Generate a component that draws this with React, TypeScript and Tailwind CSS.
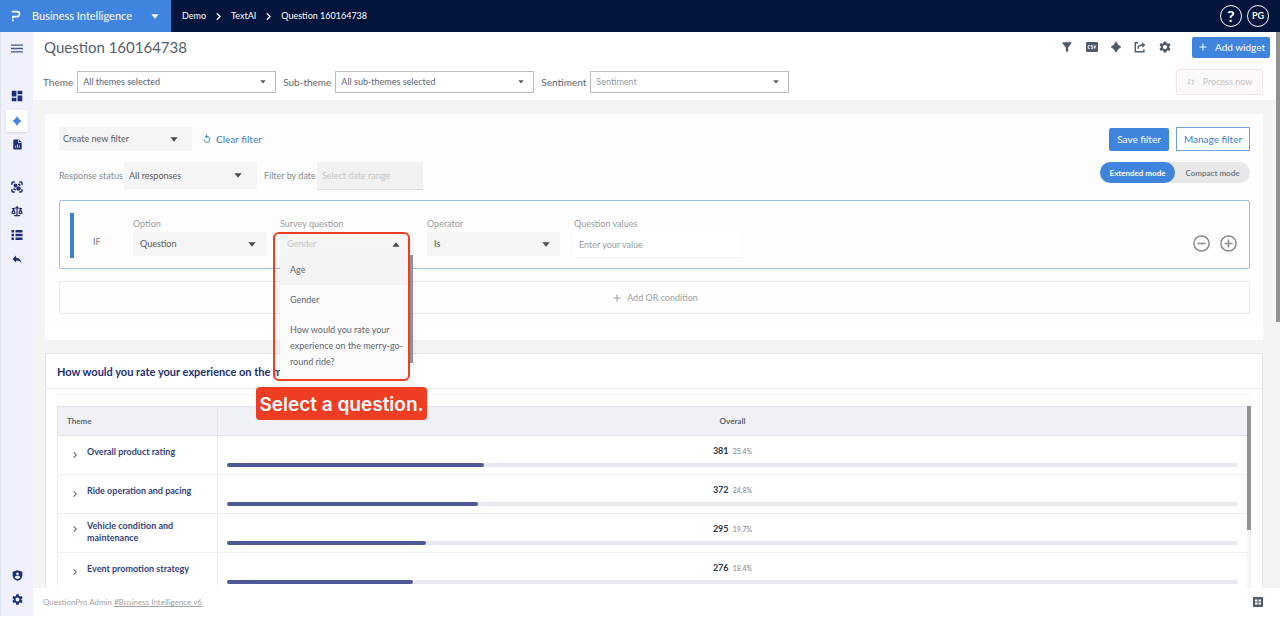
import React from "react";
import {
  MdAdd,
  MdChevronRight,
  MdDashboard,
  MdFilterAlt,
  MdReplay,
  MdReply,
  MdSettings,
} from "react-icons/md";
import { Scale } from "lucide-react";

interface IconProps {
  className?: string;
}

const Caret: React.FC<IconProps> = ({ className = "" }) => (
  <svg viewBox="0 0 8 5" className={className} fill="currentColor" aria-hidden="true">
    <path d="M0.4 0.3h7.2L4 4.8z" />
  </svg>
);

const Logo: React.FC<IconProps> = ({ className = "" }) => (
  <svg viewBox="0 0 10 12" className={className} fill="none" stroke="currentColor" strokeWidth="1.7" aria-hidden="true">
    <path d="M.8 1.6h5.200a2.500 2.500 0 0 1 0 5H1.900V8.400" />
    <path d="M1.900 9.600v1.700" />
  </svg>
);

const MenuIcon: React.FC<IconProps> = ({ className = "" }) => (
  <svg viewBox="0 0 12 9" className={className} fill="none" stroke="currentColor" strokeWidth="1.300" aria-hidden="true">
    <path d="M0 1.200h12M0 4.500h12M0 7.800h12" />
  </svg>
);

const Spark: React.FC<IconProps> = ({ className = "" }) => (
  <svg viewBox="0 0 12 12" className={className} fill="currentColor" aria-hidden="true">
    <path d="M6 0.600 8.100 3.900 11 6 8.100 8.100 6 11.400 3.900 8.100 1 6 3.900 3.900z" stroke="currentColor" strokeWidth=".6" strokeLinejoin="round" />
  </svg>
);

const ReportIcon: React.FC<IconProps> = ({ className = "" }) => (
  <svg viewBox="0 0 12 12" className={className} aria-hidden="true">
    <path fill="currentColor" d="M2.600.5h5l3 3v7a1 1 0 0 1-1 1H2.400a1 1 0 0 1-1-1v-9a1 1 0 0 1 1.200-1z" />
    <path stroke="#eff2fc" strokeWidth=".9" fill="none" d="M4 9.500V7.400M6 9.500V5.800M8 9.500V7M7.100.8v3.200h3.200" />
  </svg>
);

const ScanIcon: React.FC<IconProps> = ({ className = "" }) => (
  <svg viewBox="0 0 12 12" className={className} fill="none" stroke="currentColor" strokeWidth="1.500" aria-hidden="true">
    <path d="M.9 3.800V2.400A1.500 1.500 0 0 1 2.400.9h1.400M8.200.9h1.400a1.500 1.500 0 0 1 1.500 1.500v1.400M11.100 8.200v1.400a1.500 1.500 0 0 1-1.500 1.500H8.200M3.800 11.100H2.400A1.500 1.500 0 0 1 .9 9.600V8.200" />
    <circle cx="4.500" cy="4.500" r="1.900" fill="currentColor" stroke="none" />
    <circle cx="7.500" cy="7.500" r="2.200" fill="currentColor" stroke="none" />
    <path d="M7 3.300h1.800v1.800M3.200 6.800v1.900h1.900" strokeWidth="1.300" />
  </svg>
);

const ListIcon: React.FC<IconProps> = ({ className = "" }) => (
  <svg viewBox="0 0 12 12" className={className} fill="currentColor" aria-hidden="true">
    <path d="M.5 1H3v2.400H.5zM4.500 1h7v2.400h-7zM.5 4.800H3v2.400H.5zM4.500 4.800h7v2.400h-7zM.5 8.600H3V11H.5zM4.500 8.600h7V11h-7z" />
  </svg>
);

const ShieldIcon: React.FC<IconProps> = ({ className = "" }) => (
  <svg viewBox="0 0 12 12" className={className} aria-hidden="true">
    <path fill="currentColor" d="M6 .3 11.300 2V6c0 2.900-2.300 5-5.300 5.800C3 11 .7 8.900.7 6V2z" />
    <circle cx="6" cy="4.200" r="1.500" fill="#eff2fc" />
    <path fill="#eff2fc" d="M3 7.800C3.600 6.600 4.700 6.300 6 6.300s2.400.3 3 1.500C8.400 8.900 7.400 9.700 6 9.700S3.600 8.900 3 7.800z" />
  </svg>
);

const CsvIcon: React.FC<IconProps> = ({ className = "" }) => (
  <svg viewBox="0 0 12 10" className={className} aria-hidden="true">
    <rect width="12" height="10" rx="1.300" fill="currentColor" />
    <path d="M4.200 3.600H2.200v2.800h2M7 3.600H5.200v1.300h1.700v1.500H5M8 3.400l.9 3 .9-3" fill="none" stroke="#fff" strokeWidth=".8" />
  </svg>
);

const ShareIcon: React.FC<IconProps> = ({ className = "" }) => (
  <svg viewBox="0 0 12 12" className={className} fill="none" stroke="currentColor" strokeWidth="1.400" aria-hidden="true">
    <path d="M4 1.800H1.300v9h8.600V8.200" />
    <path d="M4 7.800C4 5.200 5.600 4 8.600 4" />
    <path d="M8.200 1.200 11.400 4 8.200 6.800z" fill="currentColor" stroke="none" />
  </svg>
);

const SyncIcon: React.FC<IconProps> = ({ className = "" }) => (
  <svg viewBox="0 0 10 10" className={className} fill="none" stroke="currentColor" strokeWidth="1.100" aria-hidden="true">
    <path d="M4.300 2.200H2.400v5.400M5.700 7.800h1.900V2.400" />
    <path d="M1 6.300l1.400 1.500 1.400-1.500M6.200 3.700l1.400-1.500L9 3.700" />
  </svg>
);

const GridIcon: React.FC<IconProps> = ({ className = "" }) => (
  <svg viewBox="0 0 10 10" className={className} aria-hidden="true">
    <rect width="10" height="10" rx="1" fill="currentColor" />
    <path fill="#fff" d="M2 2.500h2.500v2H2zM5.500 2.500H8v2H5.500zM2 5.500h2.500v2H2zM5.500 5.500H8v2H5.500z" />
  </svg>
);

const RoundIcon: React.FC<{ plus?: boolean }> = ({ plus = false }) => (
  <svg viewBox="0 0 17 17" className="size-[17px]" fill="none" stroke="currentColor" strokeWidth="1.500" aria-hidden="true">
    <circle cx="8.500" cy="8.500" r="7.600" />
    <path d="M4.500 8.500h8" strokeWidth="1.600" />
    {plus && <path d="M8.500 4.500v8" strokeWidth="1.600" />}
  </svg>
);

interface SelectBoxProps {
  id: string;
  value: string;
  label?: string;
  className: string;
  selectClass: string;
  caretClass?: string;
}

const SelectBox: React.FC<SelectBoxProps> = ({
  id,
  value,
  label,
  className,
  selectClass,
  caretClass = "right-[14px] w-2 text-[#4a4a4a]",
}) => (
  <div className={`relative flex items-center ${className}`}>
    <select
      id={id}
      aria-label={label}
      className={`size-full appearance-none outline-none ${selectClass}`}
    >
      <option>{value}</option>
    </select>
    <Caret className={`pointer-events-none absolute ${caretClass}`} />
  </div>
);

const topFilters = [
  { id: "theme", label: "Theme", value: "All themes selected", color: "text-[#5b6470]" },
  { id: "subtheme", label: "Sub-theme", value: "All sub-themes selected", color: "text-[#5b6470]" },
  { id: "sentiment", label: "Sentiment", value: "Sentiment", color: "text-[#979ca3]" },
];

const rows = [
  { theme: "Overall product rating", count: 381, percent: 25.4 },
  { theme: "Ride operation and pacing", count: 372, percent: 24.8 },
  { theme: "Vehicle condition and maintenance", count: 295, percent: 19.7 },
  { theme: "Event promotion strategy", count: 276, percent: 18.4 },
];

const questions = [
  "Age",
  "Gender",
  "How would you rate your experience on the merry-go-round ride?",
];

const Header: React.FC = () => (
  <header className="flex h-8 shrink-0 bg-[#03153d] text-white">
    <button className="flex w-[171px] items-center bg-[#3f85e0] pl-[11px] pr-3 text-[11px]">
      <Logo className="mr-[11px] h-3 w-[10px]" />
      Business Intelligence
      <Caret className="ml-auto w-2" />
    </button>
    <nav className="flex items-center gap-[5px] pl-[11px] text-[9px]" aria-label="Breadcrumb">
      <a href="#demo">Demo</a>
      <MdChevronRight className="size-[15px]" />
      <a href="#textai">TextAI</a>
      <MdChevronRight className="size-[15px]" />
      <a href="#question">Question 160164738</a>
    </nav>
    <div className="ml-auto flex items-center gap-[5px] pr-[11px]">
      <button className="flex size-[22px] items-center justify-center rounded-full border border-white text-[16px] font-bold">
        ?
      </button>
      <button className="flex size-[22px] items-center justify-center rounded-full border border-white text-[9px] font-bold">
        PG
      </button>
    </div>
  </header>
);

const Sidebar: React.FC = () => (
  <aside className="mb-[3px] flex w-[33px] shrink-0 flex-col items-center border-l border-[#dfe3ee] bg-[#eff2fc] text-[#1d2f79]">
    <button aria-label="Menu" className="mt-3 text-[#44578f]">
      <MenuIcon className="h-[9px] w-3" />
    </button>
    <button aria-label="Dashboard" className="mt-9 mb-[7px]">
      <MdDashboard className="size-[14px]" />
    </button>
    <button aria-label="TextAI" className="flex size-[22px] items-center justify-center rounded-xs bg-white text-[#3f85e0] shadow-sm">
      <Spark className="size-[10px]" />
    </button>
    <button aria-label="Reports" className="mt-1.5 p-px">
      <ReportIcon className="size-[11px]" />
    </button>
    <button aria-label="Explore" className="mt-[30px]">
      <ScanIcon className="size-3" />
    </button>
    <button aria-label="Compare" className="mt-3">
      <Scale className="size-3" strokeWidth={2.5} />
    </button>
    <button aria-label="List" className="mt-3">
      <ListIcon className="size-3" />
    </button>
    <button aria-label="Back" className="mt-3">
      <MdReply className="size-3" />
    </button>
    <button aria-label="Privacy" className="mt-auto mb-3">
      <ShieldIcon className="size-[11px]" />
    </button>
    <button aria-label="Settings" className="mb-2.5">
      <MdSettings className="size-[13px]" />
    </button>
  </aside>
);

const Toolbar: React.FC = () => (
  <div className="h-[68px] shrink-0 bg-white pl-[10px]">
    <div className="flex h-[30px] items-center pr-1.5 text-[#4f5b69]">
      <h1 className="mr-auto pl-px text-[15px] text-[#545e6b]">Question 160164738</h1>
      <div className="mr-5 flex items-center gap-3">
        <button aria-label="Filter"><MdFilterAlt className="size-[14px]" /></button>
        <button aria-label="Export CSV"><CsvIcon className="h-[10px] w-3" /></button>
        <button aria-label="Insights"><Spark className="size-3" /></button>
        <button aria-label="Share"><ShareIcon className="size-3" /></button>
        <button aria-label="Settings"><MdSettings className="size-[14px]" /></button>
      </div>
      <button className="flex h-[21px] w-[78px] items-center justify-center gap-1.5 rounded-xs bg-[#3f85e0] text-[10px] text-white">
        <MdAdd className="size-3" />
        Add widget
      </button>
    </div>
    <div className="flex items-center pt-[7px] pr-[13px]">
      {topFilters.map((f) => (
        <div key={f.id} className="mr-[7px] flex items-center gap-1">
          <label htmlFor={f.id} className="text-[10px] text-[#5f6872]">
            {f.label}
          </label>
          <SelectBox
            id={f.id}
            value={f.value}
            className="h-[22px] w-[199px]"
            selectClass={`border border-[#b9bcc0] bg-white px-[5px] text-[9px] ${f.color}`}
            caretClass="right-[10px] w-[6px] text-[#4f5b69]"
          />
        </div>
      ))}
      <button
        disabled
        className="ml-auto flex h-[26px] w-[87px] items-center justify-center gap-2 rounded-xs border border-[#f5e3e4] bg-[#fdf8f8] text-[9px] text-[#c3c3c5]"
      >
        <SyncIcon className="size-2" />
        Process now
      </button>
    </div>
  </div>
);

const QuestionPicker: React.FC = () => (
  <div className="relative w-[133px]">
    <button
      id="survey-question"
      aria-haspopup="listbox"
      aria-expanded="true"
      className="flex h-6 w-full items-center justify-between bg-[#f5f5f5] pr-[13px] pl-[7px] text-[9px] text-[#c4c4c4]"
    >
      Gender
      <Caret className="w-2 rotate-180 text-[#4a4a4a]" />
    </button>
    <ul
      role="listbox"
      aria-labelledby="survey-question"
      className="absolute top-[23px] left-0 z-10 h-[145px] w-[133px] bg-[#fafafa] text-[9px] leading-4 text-[#606770] shadow-md"
    >
      {questions.map((q, i) => (
        <li
          key={q}
          role="option"
          aria-selected={i === 0}
          className={`py-[7px] pr-1.5 pl-[10px] ${i === 0 ? "bg-[#f4f4f4]" : ""}`}
        >
          {q}
        </li>
      ))}
    </ul>
    <div className="absolute top-[23px] right-0 z-10 h-[108px] w-[4px] bg-[#929292]" />
    <div className="absolute top-0 -left-[7px] z-20 h-[149px] w-[137px] rounded-md border-2 border-[#ee3d23]" />
    <div className="absolute top-[155px] -left-[24px] z-20 flex h-[33px] w-[171px] items-center justify-center rounded-sm bg-[#ee3d23] pt-[3px] font-['Inter',sans-serif] text-[19px] font-semibold whitespace-nowrap text-white">
      Select a question.
    </div>
  </div>
);

const greySelect = "bg-[#f5f5f5] px-[7px] text-[9px] text-[#555b63]";

const FilterPanel: React.FC = () => (
  <section className="bg-white pb-[14px]">
    <div className="bg-[#fdfdfd] pt-[13px] pr-[13px] pb-3 pl-[14px]">
      <div className="flex h-6 items-center">
        <SelectBox
          id="saved-filter"
          label="Saved filter"
          value="Create new filter"
          className="h-6 w-[133px]"
          selectClass="bg-[#f5f5f5] px-1 text-[9px] text-[#555b63]"
        />
        <button className="ml-2.5 flex items-center gap-1 text-[10px] text-[#3c82cc]">
          <MdReplay className="size-[10px]" />
          Clear filter
        </button>
        <button className="mr-[7px] ml-auto h-[23px] w-[60px] rounded-xs bg-[#3f85e0] text-[10px] text-white">
          Save filter
        </button>
        <button className="h-6 w-[74px] border border-[#6fa4d8] bg-white text-[10px] text-[#3c82cc]">
          Manage filter
        </button>
      </div>
      <div className="mt-[11px] flex items-start text-[9px] text-[#868b91]">
        <div className="flex h-[27px] items-center">
          <label htmlFor="status" className="w-[65px] whitespace-nowrap">Response status</label>
          <SelectBox
            id="status"
            value="All responses"
            className="h-[27px] w-[133px]"
            selectClass="bg-[#f5f5f5] px-[5px] text-[9px] text-[#555b63]"
            caretClass="right-[15px] w-2 text-[#4a4a4a]"
          />
          <label htmlFor="date" className="ml-[7px] w-[53px] whitespace-nowrap">Filter by date</label>
          <input
            id="date"
            placeholder="Select date range"
            className="h-7 w-[106px] border-b border-[#dedede] bg-[#f1f1f1] px-[5px] placeholder:text-[#c6c6c6]"
          />
        </div>
        <div className="ml-auto flex h-[21px] rounded-full bg-[#e8e8e8] text-[8px] font-bold">
          <button className="w-[75px] rounded-full bg-[#3f85e0] text-white">Extended mode</button>
          <button className="w-[75px] text-[#777b80]">Compact mode</button>
        </div>
      </div>
      <div className="mt-[11px] flex h-[69px] rounded-xs border border-[#9dbfe2] pl-2.5 text-[9px] text-[#9a9da1]">
        <div className="mt-3 h-[45px] w-1 bg-[#3f7fd8]" />
        <span className="mt-[34px] w-[59px] pl-[19px] text-[9px] text-[#777b80]">IF</span>
        <div className="flex gap-[14px] pt-[17px]">
          <div className="flex flex-col gap-[2px]">
            <label htmlFor="option" className="leading-3">Option</label>
            <SelectBox id="option" value="Question" className="h-6 w-[133px]" selectClass={greySelect} caretClass="right-[10px] w-2 text-[#4a4a4a]" />
          </div>
          <div className="flex flex-col gap-[2px]">
            <label htmlFor="survey-question" className="leading-3">Survey question</label>
            <QuestionPicker />
          </div>
          <div className="flex flex-col gap-[2px]">
            <label htmlFor="operator" className="leading-3">Operator</label>
            <SelectBox id="operator" value="Is" className="h-6 w-[133px]" selectClass={greySelect} caretClass="right-[10px] w-2 text-[#4a4a4a]" />
          </div>
          <div className="flex flex-col gap-[2px]">
            <label htmlFor="values" className="leading-3">Question values</label>
            <input
              id="values"
              placeholder="Enter your value"
              className="h-[26px] w-[167px] border-b border-[#f3f3f3] bg-white px-[5px] placeholder:text-[#9a9da1]"
            />
          </div>
        </div>
        <div className="ml-auto flex gap-2.5 self-start pt-[34px] pr-3 text-[#8f8f8f]">
          <button aria-label="Remove condition"><RoundIcon /></button>
          <button aria-label="Add condition"><RoundIcon plus /></button>
        </div>
      </div>
      <button className="mt-[12px] flex h-[33px] w-full items-center justify-center gap-1 rounded-xs border border-[#ededed] text-[9px] text-[#a0a0a0]">
        <MdAdd className="size-3" />
        Add OR condition
      </button>
    </div>
  </section>
);

const ThemeWidget: React.FC = () => (
  <section className="mt-[13px] flex min-h-0 flex-1 flex-col overflow-hidden border border-b-0 border-[#e4e4e4] bg-white">
    <h2 className="h-[35px] shrink-0 border-b border-[#ececec] pl-[11px] text-[11px] leading-[35px] font-bold text-[#1d2f6f]">
      How would you rate your experience on the merry-go-round ride?
    </h2>
    <div className="mr-[11px] ml-[10px] mt-[5px] flex min-h-0 flex-1 overflow-hidden border-t border-[#f3f3f3] pt-[11px] pl-px">
      <div className="min-w-0 flex-1">
        <table className="w-full table-fixed border-collapse text-left">
          <thead>
            <tr className="h-[29px] bg-[#f0f1f6] text-[8px] text-[#5b6470]">
              <th className="w-[160px] border border-[#e3e5ea] pl-[9px] font-bold">Theme</th>
              <th className="border border-r-0 border-[#e3e5ea] text-center font-bold">Overall</th>
            </tr>
          </thead>
          <tbody>
            {rows.map((row) => (
              <tr key={row.theme} className="h-[39px]">
                <td className="border border-[#eceef1] pb-[3px] pl-[11px]">
                  <div className="flex items-start gap-1.5 text-[9px] leading-3 font-bold text-[#34437c]">
                    <button aria-label={`Expand ${row.theme}`} className="mt-[3px] text-[#5b6470]">
                      <MdChevronRight className="size-3" />
                    </button>
                    <span className="w-[115px]">{row.theme}</span>
                  </div>
                </td>
                <td className="border border-r-0 border-[#eceef1] px-[9px] pb-px">
                  <div className="text-center leading-3">
                    <span className="text-[9px] font-bold text-[#2b3848]">{row.count}</span>{" "}
                    <span className="text-[7px] text-[#7c8490]">{row.percent}%</span>
                  </div>
                  <div className="mt-[6px] h-1 rounded-full bg-[#e7e8f0]">
                    <div className="h-1 rounded-full bg-[#4d5a95]" style={{ width: `${row.percent}%` }} />
                  </div>
                </td>
              </tr>
            ))}
          </tbody>
        </table>
      </div>
      <div className="w-1 bg-[#f4f4f6]">
        <div className="h-[124px] bg-[#929292]" />
      </div>
    </div>
  </section>
);

const App: React.FC = () => {
  return (
    <div className="flex h-screen flex-col overflow-hidden bg-white font-['Lato',sans-serif]">
      <Header />
      <div className="flex min-h-0 flex-1">
        <Sidebar />
        <div className="flex min-w-0 flex-1 flex-col">
          <div className="flex min-h-0 flex-1">
            <main className="flex min-w-0 flex-1 flex-col bg-[#f4f4f4]">
              <Toolbar />
              <div className="flex min-h-0 flex-1 flex-col pt-[14px] pr-[13px] pl-3">
                <FilterPanel />
                <ThemeWidget />
              </div>
            </main>
            <div className="w-1 bg-[#f4f4f4]">
              <div className="h-[290px] bg-[#929292]" />
            </div>
          </div>
          <footer className="flex h-[31px] shrink-0 items-center justify-between bg-white pr-[17px] pb-[3px] pl-[10px] text-[8px] text-[#a2a2a2]">
            <span>
              QuestionPro Admin{" "}
              <a href="#version" className="underline">#Business Intelligence v6</a>
            </span>
            <button aria-label="Apps" className="text-[#4f5b69]">
              <GridIcon className="size-[10px]" />
            </button>
          </footer>
        </div>
      </div>
    </div>
  );
};

export default App;
